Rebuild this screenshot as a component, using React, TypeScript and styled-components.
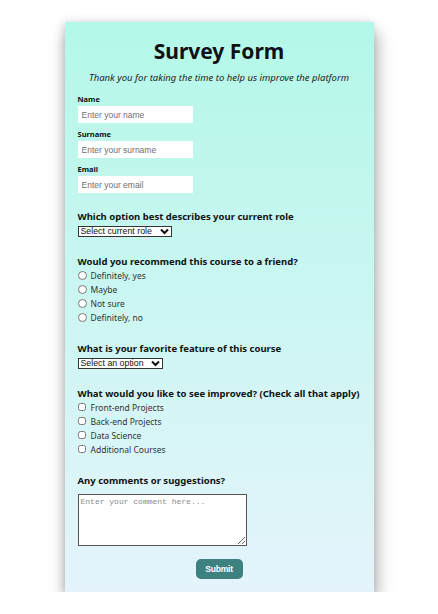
import styled, { createGlobalStyle } from 'styled-components';

const GlobalStyle = createGlobalStyle`
  html, body {
    margin: 0;
    padding: 0;
    background: #ffffff;
  }
  body {
    font-family: "Noto Sans", "Open Sans", sans-serif;
    color: #111;
  }
`;

const Card = styled.form`
  width: 309px;
  margin: 22px auto 0;
  padding: 0 13px 13px;
  box-sizing: border-box;
  background: linear-gradient(180deg, #b3f8e8 0%, #e5f4fc 100%);
  box-shadow: 2px 10px 16px rgba(0, 0, 0, 0.35), -2px 0 8px rgba(0, 0, 0, 0.12);
  display: flex;
  flex-direction: column;
`;

const Title = styled.h1`
  margin: 16px 0 0;
  font-size: 21px;
  line-height: 26px;
  font-weight: 700;
  text-align: center;
`;

const Subtitle = styled.p`
  margin: 7px 0 0;
  font-size: 9.5px;
  line-height: 14px;
  font-style: italic;
  text-align: center;
  color: #222;
`;

const FieldLabel = styled.label`
  display: block;
  margin-top: 6px;
  font-size: 7.5px;
  line-height: 10px;
  font-weight: 700;

  &:first-of-type {
    margin-top: 9px;
  }
`;

const TextInput = styled.input`
  display: block;
  width: 115px;
  height: 17px;
  margin-top: 2px;
  padding: 0 4px;
  box-sizing: border-box;
  border: none;
  outline: none;
  background: #fff;
  font-family: "Liberation Sans", Arial, sans-serif;
  font-size: 8.5px;

  &::placeholder {
    color: #6f6f6f;
  }
`;

const Section = styled.fieldset<{ $gap?: number }>`
  margin: ${p => p.$gap ?? 18}px 0 0;
  padding: 0;
  border: none;
  min-width: 0;
`;

const Question = styled.legend`
  padding: 0;
  font-size: 9.5px;
  line-height: 13px;
  font-weight: 700;
  white-space: nowrap;
`;

const SelectBox = styled.div<{ $width: number }>`
  display: flex;
  align-items: center;
  width: ${p => p.$width}px;
  height: 11px;
  margin-top: 3px;
  box-sizing: border-box;
  border: 1px solid #333;
  background: #fff;
  padding: 0 2px 0 2px;
`;

const NativeSelect = styled.select`
  appearance: none;
  -webkit-appearance: none;
  border: none;
  outline: none;
  background: transparent;
  padding: 0;
  margin: 0;
  height: 9px;
  width: calc(100% - 11px);
  flex: none;
  font-family: "Liberation Sans", Arial, sans-serif;
  font-size: 8.8px;
  line-height: 9px;
  color: #111;
`;

const ChevronIcon = styled.svg`
  display: block;
  flex: none;
  margin-left: auto;
`;

const OptionList = styled.div`
  display: flex;
  flex-direction: column;
`;

const OptionRow = styled.label`
  display: flex;
  align-items: center;
  height: 14px;
  font-size: 8.5px;
  color: #333;

  input {
    margin: 0 4px 0 0;
    width: 9px;
    height: 9px;
    flex: none;
  }
`;

const CheckRow = styled(OptionRow)`
  input {
    width: 8px;
    height: 8px;
    margin: 0 5px 0 0;
  }
`;

const Comment = styled.textarea`
  display: block;
  width: 169px;
  height: 52px;
  margin-top: 7px;
  padding: 2px 2px;
  box-sizing: border-box;
  border: 1px solid #555;
  background: #fff;
  font-family: "Liberation Mono", "DejaVu Sans Mono", monospace;
  font-size: 8px;

  &::placeholder {
    color: #8a8a8a;
  }
`;

const SubmitButton = styled.button`
  align-self: center;
  width: 47px;
  height: 20px;
  margin-top: 13px;
  border: none;
  border-radius: 5px;
  background: #3e8181;
  color: #fff;
  font-family: "Liberation Sans", Arial, sans-serif;
  font-size: 8.5px;
  font-weight: 700;
  letter-spacing: -0.2px;
`;

function Chevron() {
  return (
    <ChevronIcon width="9" height="7" viewBox="0 0 9 7" aria-hidden="true">
      <path d="M1 1.5 L4.5 5 L8 1.5" fill="none" stroke="#111" strokeWidth="2" />
    </ChevronIcon>
  );
}

const roles = ['Select current role', 'Student', 'Full-time job', 'Prefer not to say'];
const features = ['Select an option', 'Challenges', 'Projects', 'Community'];
const recommend = ['Definitely, yes', 'Maybe', 'Not sure', 'Definitely, no'];
const improvements = ['Front-end Projects', 'Back-end Projects', 'Data Science', 'Additional Courses'];

export default function App() {
  return (
    <>
      <GlobalStyle />
      <Card onSubmit={e => e.preventDefault()}>
        <Title>Survey Form</Title>
        <Subtitle>Thank you for taking the time to help us improve the platform</Subtitle>

        <FieldLabel htmlFor="name">Name</FieldLabel>
        <TextInput id="name" type="text" placeholder="Enter your name" />
        <FieldLabel htmlFor="surname">Surname</FieldLabel>
        <TextInput id="surname" type="text" placeholder="Enter your surname" />
        <FieldLabel htmlFor="email">Email</FieldLabel>
        <TextInput id="email" type="email" placeholder="Enter your email" />

        <Section $gap={17}>
          <Question>Which option best describes your current role</Question>
          <SelectBox $width={94}>
            <NativeSelect defaultValue={roles[0]}>
              {roles.map(r => (
                <option key={r}>{r}</option>
              ))}
            </NativeSelect>
            <Chevron />
          </SelectBox>
        </Section>

        <Section>
          <Question>Would you recommend this course to a friend?</Question>
          <OptionList>
            {recommend.map(r => (
              <OptionRow key={r}>
                <input type="radio" name="recommend" />
                {r}
              </OptionRow>
            ))}
          </OptionList>
        </Section>

        <Section>
          <Question>What is your favorite feature of this course</Question>
          <SelectBox $width={85}>
            <NativeSelect defaultValue={features[0]}>
              {features.map(f => (
                <option key={f}>{f}</option>
              ))}
            </NativeSelect>
            <Chevron />
          </SelectBox>
        </Section>

        <Section>
          <Question>What would you like to see improved? (Check all that apply)</Question>
          <OptionList>
            {improvements.map(i => (
              <CheckRow key={i}>
                <input type="checkbox" />
                {i}
              </CheckRow>
            ))}
          </OptionList>
        </Section>

        <Section>
          <Question>Any comments or suggestions?</Question>
          <Comment placeholder="Enter your comment here..." />
        </Section>

        <SubmitButton type="submit">Submit</SubmitButton>
      </Card>
    </>
  );
}
